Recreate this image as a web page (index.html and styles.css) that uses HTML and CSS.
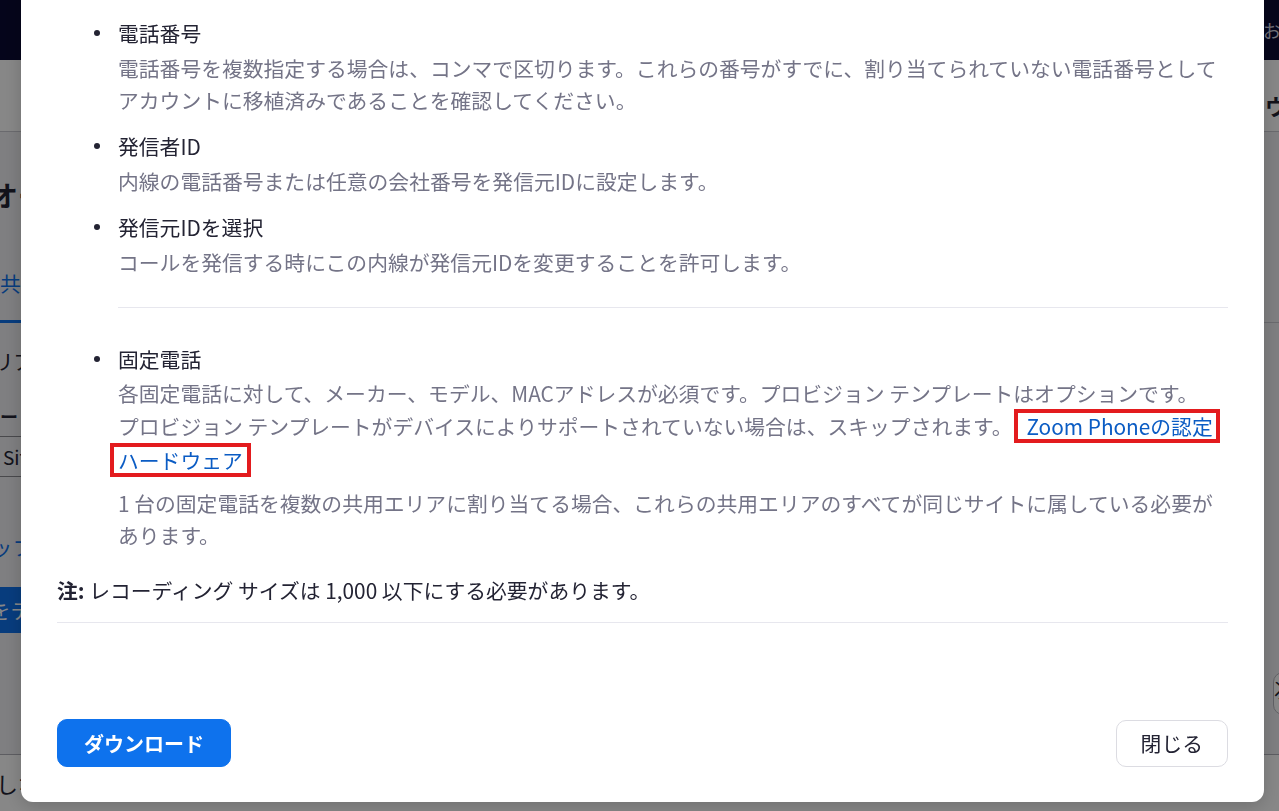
FILE: index.html
```html
<!DOCTYPE html>
<html lang="ja">
<head>
<meta charset="utf-8">
<title>共用エリア</title>
<link rel="stylesheet" href="styles.css">
</head>
<body>
<div class="page">
  <header class="topbar"><span class="help">お問い合わせ</span></header>
  <div class="subbar"><span class="subbar-title">ウェブポータル</span></div>
  <main class="main">
    <h1 class="pg-title">オーディオ</h1>
    <div class="tabs"><span class="tab">共用エリア</span></div>
    <div class="row-label">エリア</div>
    <div class="field-label">ゲートウェイ</div>
    <div class="input">Site</div>
    <div class="blue-link">スタッフ</div>
    <div class="blue-btn">設定をテスト</div>
    <div class="right-row"><span class="ghost-btn">次へ</span></div>
  </main>
  <footer class="bottombar">しない</footer>
</div>

<div class="overlay">
  <div class="modal">
    <div class="modal-body">
      <ul class="fields">
        <li class="field">
          <span class="dot"></span>
          <div class="field-text">
            <div class="field-title">電話番号</div>
            <p class="field-desc">電話番号を複数指定する場合は、コンマで区切ります。これらの番号がすでに、割り当てられていない電話番号としてアカウントに移植済みであることを確認してください。</p>
          </div>
        </li>
        <li class="field">
          <span class="dot"></span>
          <div class="field-text">
            <div class="field-title">発信者ID</div>
            <p class="field-desc">内線の電話番号または任意の会社番号を発信元IDに設定します。</p>
          </div>
        </li>
        <li class="field">
          <span class="dot"></span>
          <div class="field-text">
            <div class="field-title">発信元IDを選択</div>
            <p class="field-desc">コールを発信する時にこの内線が発信元IDを変更することを許可します。</p>
          </div>
        </li>
      </ul>
      <hr class="sub-divider">
      <ul class="fields fields-second">
        <li class="field">
          <span class="dot"></span>
          <div class="field-text">
            <div class="field-title">固定電話</div>
            <p class="field-desc desc-tight">各固定電話に対して、メーカー、モデル、MACアドレスが必須です。プロビジョン テンプレートはオプションです。<br>プロビジョン テンプレートがデバイスによりサポートされていない場合は、スキップされます。<a class="hl hl-a" href="#">Zoom Phoneの認定</a><br><a class="hl hl-b" href="#">ハードウェア</a></p>
            <p class="field-desc desc-next">1 台の固定電話を複数の共用エリアに割り当てる場合、これらの共用エリアのすべてが同じサイトに属している必要があります。</p>
          </div>
        </li>
      </ul>
      <p class="note"><b>注:</b> レコーディング サイズは 1,000 以下にする必要があります。</p>
      <hr class="divider">
    </div>
    <div class="modal-footer">
      <button class="btn btn-primary" type="button">ダウンロード</button>
      <button class="btn btn-default" type="button">閉じる</button>
    </div>
  </div>
</div>
</body>
</html>
```

FILE: styles.css
```css
* { box-sizing: border-box; }

html, body {
  margin: 0;
  height: 100%;
  overflow: hidden;
}

body {
  font-family: "Noto Sans CJK JP", "Noto Sans", sans-serif;
  color: #232333;
  background: #f0f0f3;
}

/* ---------- page behind the dialog ---------- */
.page {
  height: 100vh;
  display: flex;
  flex-direction: column;
}

.topbar {
  height: 60px;
  flex: none;
  background: #0b0b33;
  display: flex;
  align-items: center;
  justify-content: flex-end;
}

.help {
  color: #d6d6e2;
  font-size: 18px;
  white-space: nowrap;
  margin-right: -92px;
}

.subbar {
  height: 72px;
  flex: none;
  background: #ffffff;
  border-bottom: 1px solid #c9c9d0;
  display: flex;
  align-items: flex-end;
  justify-content: flex-end;
  padding-bottom: 10px;
}

.subbar-title {
  font-size: 22px;
  font-weight: 700;
  line-height: 32px;
  white-space: nowrap;
  margin-right: -140px;
}

.main {
  flex: 1;
  display: flex;
  flex-direction: column;
  align-items: flex-start;
  font-size: 20.8px;
  line-height: 32px;
}

.pg-title {
  margin: 43px 0 0 -10px;
  font-size: 28px;
  line-height: 40px;
  font-weight: 700;
}

.tabs {
  margin-top: 52px;
  align-self: stretch;
  border-bottom: 1px solid #c9c9d0;
}

.tab {
  display: inline-block;
  color: #0e72ed;
  padding-bottom: 21px;
  border-bottom: 3px solid #0e72ed;
  margin-bottom: -1px;
}

.row-label {
  margin: 22px 0 0 -28px;
}

.field-label {
  margin: 23px 0 0 -18px;
  font-size: 18px;
  font-weight: 700;
}

.input {
  margin: 4px 0 0 -10px;
  width: 300px;
  height: 41px;
  border: 1px solid #8a8a90;
  padding-left: 12px;
  font-size: 19px;
  line-height: 39px;
}

.blue-link {
  margin: 54px 0 0 -50px;
  color: #0e72ed;
}

.blue-btn {
  margin: 24px 0 0 -68px;
  height: 46px;
  line-height: 46px;
  padding: 0 20px 0 16px;
  background: #0e72ed;
  color: #ffffff;
  border-radius: 8px;
}

.right-row {
  align-self: stretch;
  display: flex;
  justify-content: flex-end;
  margin-top: 39px;
}

.ghost-btn {
  display: inline-block;
  height: 43px;
  width: 70px;
  margin-right: -64px;
  border: 1px solid #b8b8c0;
  border-radius: 10px;
  background: #ffffff;
}

.bottombar {
  height: 57px;
  flex: none;
  background: #ffffff;
  border-top: 1px solid #b0b0b8;
  font-size: 22px;
  line-height: 56px;
  padding-left: 0;
  margin-left: -4px;
}

/* ---------- overlay + dialog ---------- */
.overlay {
  position: fixed;
  inset: 0;
  background: rgba(0, 0, 0, 0.47);
  display: flex;
  align-items: flex-start;
}

.modal {
  width: 1243px;
  margin: -20px 0 0 21px;
  background: #ffffff;
  border-radius: 12px;
  padding: 37px 36px 35px;
  box-shadow: 0 4px 18px rgba(0, 0, 0, 0.18);
  font-size: 20.8px;
  line-height: 32px;
}

.fields {
  list-style: none;
  margin: 0;
  padding: 0;
}

.field {
  display: grid;
  grid-template-columns: 61px 1fr;
}

.field + .field {
  margin-top: 14px;
}

.dot {
  justify-self: end;
  align-self: start;
  width: 6px;
  height: 6px;
  margin: 13px 18px 0 0;
  border-radius: 50%;
  background: #232333;
}

.field-title {
  color: #232333;
}

.field-desc {
  margin: 3px 0 0;
  color: #747487;
}

.desc-tight {
  margin-top: 2px;
}

.desc-next {
  margin-top: 10px;
}

.sub-divider {
  margin: 29px 0 0 61px;
  border: 0;
  border-top: 1px solid #e7e7ee;
}

.fields-second {
  margin-top: 35px;
}

.hl {
  display: inline-block;
  line-height: 26px;
  color: #0b5cc4;
  text-decoration: none;
  border: 4px solid #e31b1e;
}

.hl-a {
  padding: 0 3px 0 9px;
  margin-left: 1px;
  margin-right: -40px;
}

.hl-b {
  padding: 0 4px;
  margin-left: -8px;
}

.note {
  margin: 23px 0 0;
  color: #232333;
}

.note b {
  font-weight: 700;
}

.divider {
  margin: 16px 0 0;
  border: 0;
  border-top: 1px solid #e7e7ee;
}

.modal-footer {
  margin-top: 96px;
  display: flex;
  justify-content: space-between;
  align-items: center;
}

.btn {
  font-family: inherit;
  font-size: 20px;
  height: 48px;
  padding: 0 24px;
  border-radius: 10px;
  cursor: pointer;
}

.btn-primary {
  background: #0e72ed;
  color: #ffffff;
  border: 1px solid #0e72ed;
  font-weight: 700;
  padding: 0 26px;
}

.btn-default {
  background: #ffffff;
  color: #232333;
  border: 1px solid #dcdce2;
  height: 47px;
  font-size: 20.8px;
}
```
